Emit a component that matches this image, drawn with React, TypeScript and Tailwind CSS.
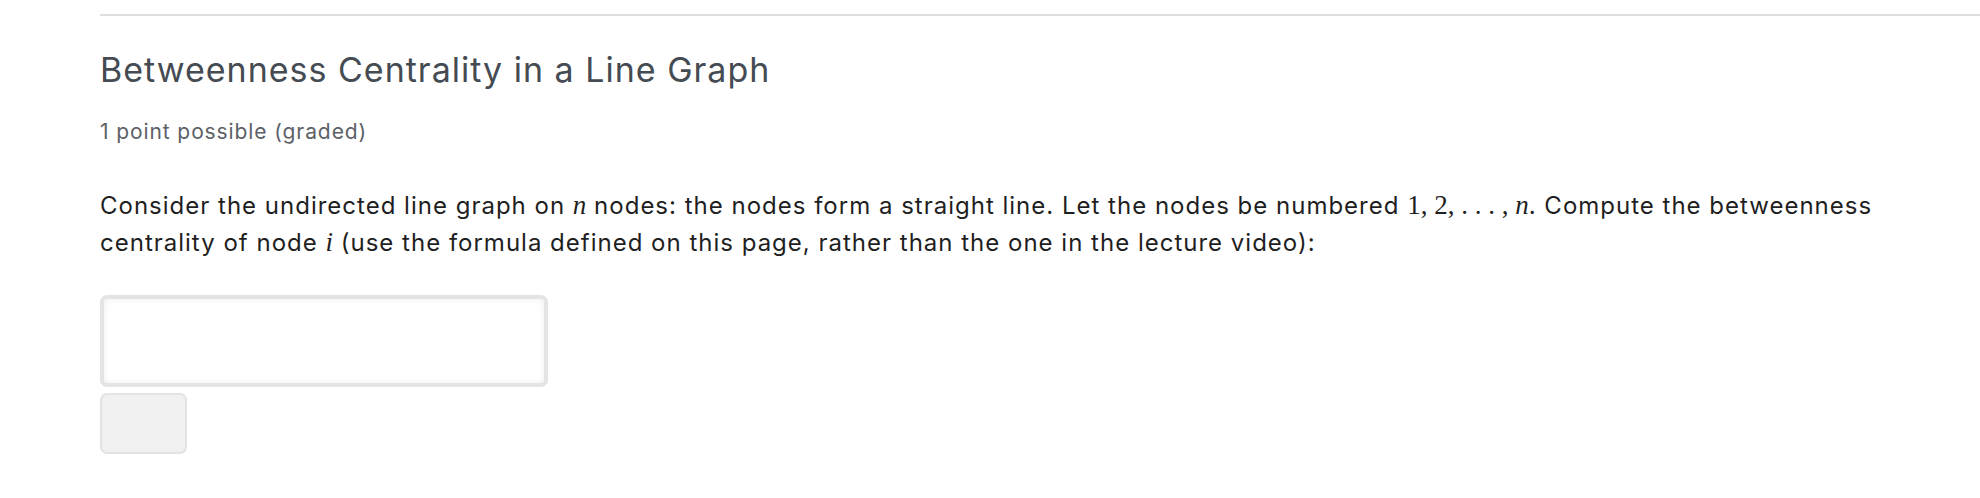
import React, { useState } from 'react';

const Math: React.FC<{ children: React.ReactNode; italic?: boolean }> = ({ children, italic }) => (
  <span
    className={`font-['Liberation_Serif','DejaVu_Serif',serif] text-[27px] leading-none tracking-normal ${
      italic ? 'italic' : ''
    }`}
  >
    {children}
  </span>
);

export default function App() {
  const [answer, setAnswer] = useState('');

  return (
    <div className="min-h-screen bg-white pl-[100px] font-['Inter','Liberation_Sans',sans-serif]">
      <div className="pt-[14px]">
        <div className="border-t-2 border-[#dedede] pr-[60px]">
          <h3 className="mt-[34px] text-[34px] leading-10 font-normal tracking-[1px] text-[#454b52]">
            Betweenness Centrality in a Line Graph
          </h3>
          <div className="mt-[28px] text-[21px] leading-7 tracking-[0.9px] text-[#5d6167]">
            1 point possible (graded)
          </div>

          <p className="mt-[41px] text-[24px] leading-[37px] tracking-[1px] text-[#1f1f1f]">
            Consider the undirected line graph on <Math italic>n</Math> nodes: the nodes form a straight line. Let
            the nodes be numbered <Math>1, 2, . . . , </Math>
            <Math italic>n</Math>. Compute the betweenness centrality of node <Math italic>i</Math> (use the formula
            defined on this page, rather than the one in the lecture video):
          </p>

          <div className="mt-[34px] flex flex-col gap-[6px]">
            <input
              type="text"
              value={answer}
              onChange={(e) => setAnswer(e.target.value)}
              className="w-[448px] h-[92px] rounded-[7px] border-4 border-[#e3e4e6] bg-white px-3 text-[22px] shadow-[inset_0_0_6px_rgba(0,0,0,0.08)] focus:outline-none"
            />
            <button
              type="button"
              className="w-[87px] h-[61px] rounded-[7px] border-2 border-[#e3e3e3] bg-[#f0f0f0]"
            />
          </div>
        </div>
      </div>
    </div>
  );
}
